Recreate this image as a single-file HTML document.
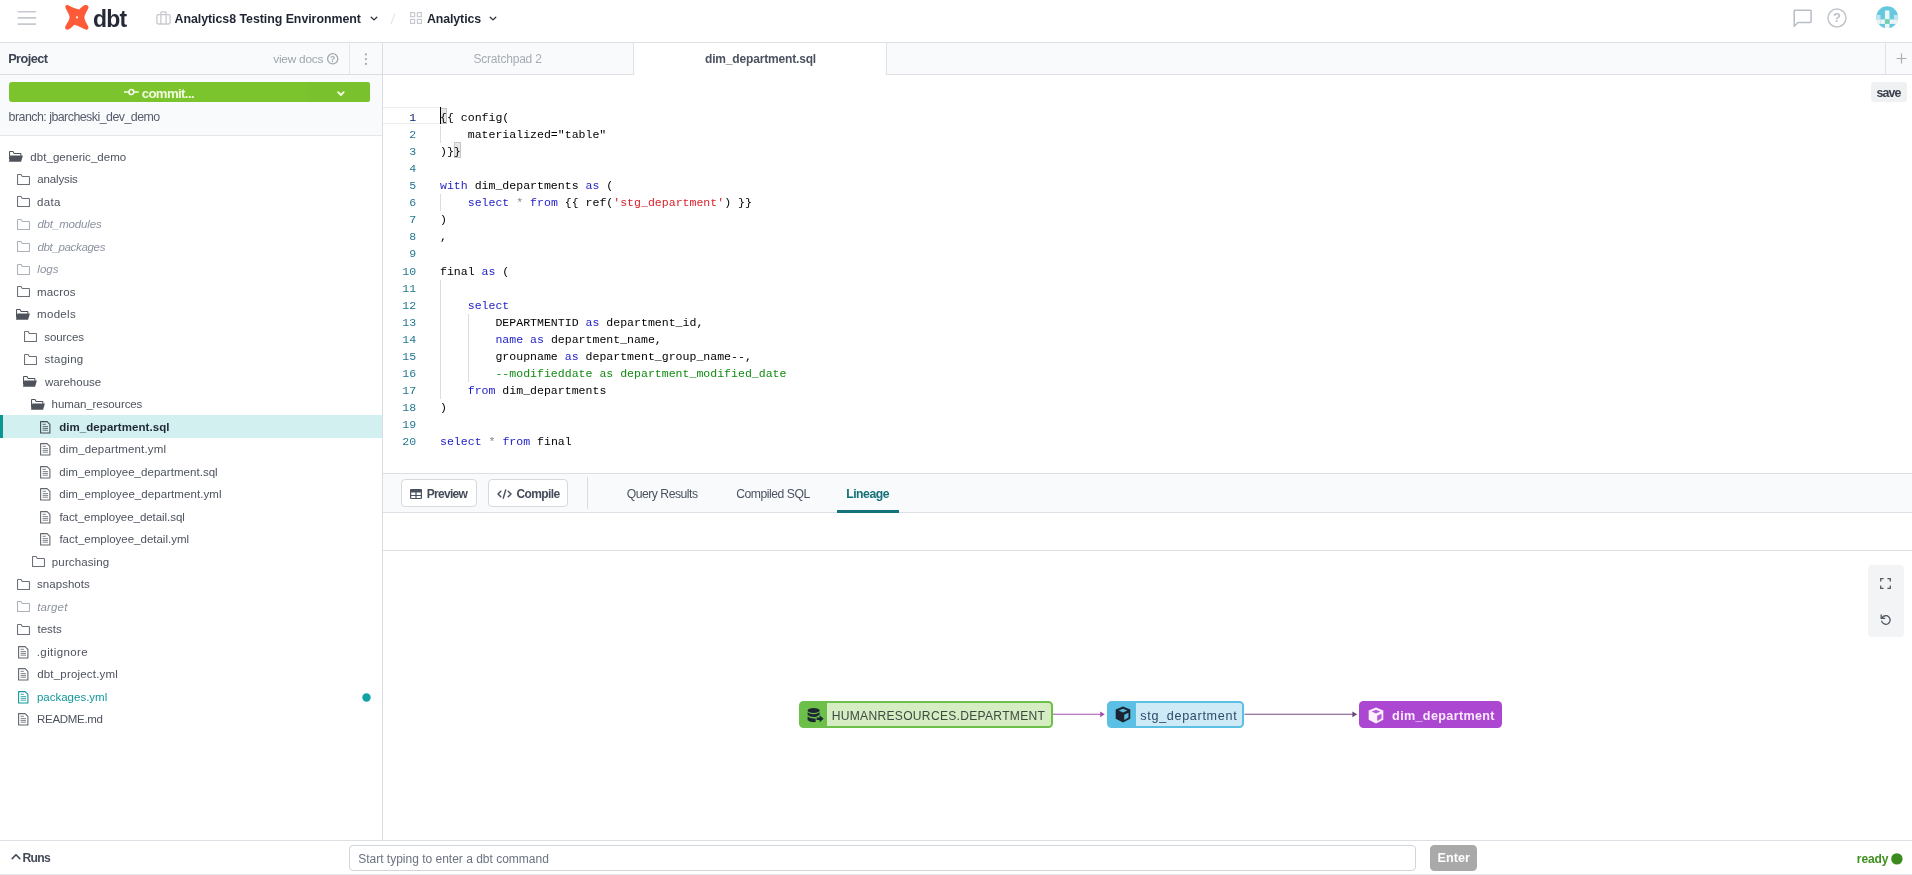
<!DOCTYPE html>
<html lang="en">
<head>
<meta charset="utf-8">
<title>dbt Cloud IDE - dim_department.sql</title>
<style>
*{box-sizing:border-box;margin:0;padding:0}
html,body{width:1912px;height:875px;overflow:hidden;background:#fff}
body{position:relative;will-change:transform;font-family:"Liberation Sans",sans-serif;font-size:11.5px;color:#4a5261;-webkit-font-smoothing:antialiased}
.abs{position:absolute}
span.t{position:absolute;white-space:nowrap;line-height:1;transform-origin:0 50%}
svg{position:absolute;overflow:visible}

/* ---------- top header ---------- */
#top{position:absolute;left:0;top:0;width:1912px;height:43px;background:#fff;border-bottom:1px solid #dfe1e4}
#top .t{font-weight:700;color:#1f2532}

/* ---------- sidebar ---------- */
#side{position:absolute;left:0;top:43px;width:383px;height:798px;background:#fff;border-right:1px solid #d9dce1}
#phead{position:absolute;left:0;top:0;width:382px;height:32px;background:#f9fafb;border-bottom:1px solid #dcdee2}
#pgit{position:absolute;left:0;top:32px;width:382px;height:61px;background:#f9fafb;border-bottom:1px solid #e3e6ea}
#commit{position:absolute;left:9px;top:7px;width:361px;height:20px;border-radius:3px;background:#7bc42e;overflow:hidden}
#commit i{position:absolute;right:0;top:0;width:62px;height:20px;background:#79c22d}
#tree{position:absolute;left:0;top:102.2px;width:382px;list-style:none}
#tree li{position:relative;height:22.5px;width:382px}
#tree li.sel{background:#d3f0f0;border-left:3px solid #0c9593}
#tree li .t{color:#4c525e}
#tree li.ign .t{font-style:italic;color:#8c93a0}
#tree li.sel .t{font-weight:700;color:#1f2733}
#tree li.mod .t{color:#12979b}

/* ---------- main ---------- */
#tabs{position:absolute;left:383px;top:43px;width:1529px;height:32px;background:#f9fafb;border-bottom:1px solid #dcdee2}
#tabs .tab{position:absolute;top:0;height:32px}
#tab1{left:0;width:251px;border-right:1px solid #dfe2e6}
#tab2{left:251px;width:253px;background:#fff;height:32px;border-right:1px solid #dfe2e6}
#tabplus{position:absolute;left:1502px;top:0;width:27px;height:31px;border-left:1px solid #dfe2e6}
#editor{position:absolute;left:383px;top:75px;width:1529px;height:398px;background:#fff}
#save{position:absolute;left:1488px;top:7px;width:36px;height:20px;border-radius:3px;background:#f0f1f3}
#code{position:absolute;left:0;top:33.7px;width:1529px;font-family:"Liberation Mono",monospace;font-size:11.55px;line-height:17.1px;color:#000;list-style:none}
#code li{position:relative;height:17.1px;white-space:pre}
#code li b{position:absolute;left:0;width:33.2px;text-align:right;font-weight:400;color:#237893}
#code li code{position:absolute;left:57px;font-family:inherit}
#code .k{color:#1d1dc4}
#code .s{color:#d8222c}
#code .c{color:#118a11}
#code .o{color:#8a8a8a}
#code .g{position:absolute;width:1px;background:#dcdcdc;top:0;height:17.1px}

#bar{position:absolute;left:383px;top:473px;width:1529px;height:40px;background:#f9fafb;border-top:1px solid #dcdfe3;border-bottom:1px solid #dcdfe3}
.btn{position:absolute;top:5.4px;height:27.6px;background:#fff;border:1px solid #d6dade;border-radius:4px}
#bar .t{color:#4a5261}
#strip{position:absolute;left:383px;top:513px;width:1529px;height:38px;background:#fff;border-bottom:1px solid #dcdfe3}
#graph{position:absolute;left:383px;top:551px;width:1529px;height:290px;background:#fff}
.node{position:absolute;top:150px;height:27px;border-radius:4.5px}
#ctl{position:absolute;left:1485px;top:14px;width:36px;height:72px;border-radius:4px;background:#f3f4f6}

/* ---------- footer ---------- */
#foot{position:absolute;left:0;top:840px;width:1912px;height:35px;background:#fff;border-top:1px solid #dcdfe3;border-bottom:1px solid #e3e6ea}
#cmd{position:absolute;left:349px;top:4px;width:1067px;height:26px;border:1px solid #d2d5d9;border-radius:4px;background:#fff}
#enter{position:absolute;left:1430px;top:4px;width:47px;height:26px;border-radius:4.5px;background:#a9a9a9}
</style>
</head>
<body>
<header id="top">
<svg style="left:17px;top:10px" width="20" height="16" viewBox="0 0 20 16"><g stroke="#c6cad0" stroke-width="1.6" stroke-linecap="round"><path d="M1.2 1.7H18.6M1.2 7.9H18.6M1.2 14.1H18.6"/></g></svg>
<svg style="left:60px;top:0" width="35" height="35" viewBox="0 0 35 35"><path fill="#fd5a38" d="M5.3 6.6C5.3 5.4 6.6 4.7 7.9 5.1C11.5 6.9 15.6 9 19.3 9.5C20.6 8 22.6 6.3 24.4 5.3C25.8 4.6 27.6 5 28.2 6.2C28.8 7.4 28.3 8.6 27.6 9.8C25.6 13.5 24.4 15.6 24.4 17.4C24.4 19.4 26 22.6 28 26C28.9 27.6 28.4 29 27.2 29.5C26 30 24.8 29.4 23.6 28.8C20.6 27.3 17.6 25.6 14.2 24.8C13 26.2 11.6 27.6 10.2 28.6C8.8 29.7 7 30 6 29.2C4.8 28.2 5 26.8 5.8 25.4C7.8 22 9.6 19.4 9.6 17.4C9.6 15.4 7.6 12 5.9 8.8C5.5 8 5.3 7.3 5.3 6.6Z"/><circle cx="17" cy="17.4" r="1.15" fill="#fff1e0"/></svg>
<span class="t" id="dbt" style="left:92.93px;top:7.50px;font-size:23px;letter-spacing:-0.759px;color:#262a38;">dbt</span>
<svg style="left:156px;top:11px" width="15" height="14" viewBox="0 0 15 14"><g fill="none" stroke="#c6c9ce" stroke-width="1.3" stroke-linejoin="round"><rect x="0.9" y="3.6" width="13.2" height="9.4" rx="1.4"/><path d="M4.9 3.6V1.6a.8 .8 0 0 1 .8-.8h3.6a.8 .8 0 0 1 .8 .8V3.6M4.9 3.6V13M10.1 3.6V13"/></g></svg>
<span class="t" id="env" style="left:174.54px;top:13.12px;font-size:12.4px;letter-spacing:-0.047px;">Analytics8 Testing Environment</span>
<svg style="left:369.6px;top:16.2px" width="8" height="5" viewBox="0 0 8 5"><path d="M1.2 1.2L4 3.9L6.8 1.2" fill="none" stroke="#2b303b" stroke-width="1.3" stroke-linecap="round" stroke-linejoin="round"/></svg>
<svg style="left:390px;top:13px" width="6" height="12" viewBox="0 0 6 12"><path d="M4.9 .8L.8 11.4" stroke="#e1e3e7" stroke-width="1.1" fill="none"/></svg>
<svg style="left:410px;top:12px" width="12" height="12" viewBox="0 0 12 12"><g fill="none" stroke="#c6c9ce" stroke-width="1.2"><rect x=".6" y=".6" width="4" height="4"/><rect x="7.4" y=".6" width="4" height="4"/><rect x=".6" y="7.4" width="4" height="4"/><rect x="7.4" y="7.4" width="4" height="4"/></g></svg>
<span class="t" id="proj" style="left:426.95px;top:13.12px;font-size:12.4px;letter-spacing:-0.112px;">Analytics</span>
<svg style="left:489.4px;top:16.2px" width="8" height="5" viewBox="0 0 8 5"><path d="M1.2 1.2L4 3.9L6.8 1.2" fill="none" stroke="#2b303b" stroke-width="1.3" stroke-linecap="round" stroke-linejoin="round"/></svg>
<svg style="left:1793px;top:9px" width="20" height="19" viewBox="0 0 20 19"><path d="M1.6 1.2H17.2a.9 .9 0 0 1 .9 .9V12.6a.9 .9 0 0 1-.9 .9H5L1.2 17.2V2.1a.9 .9 0 0 1 .4-.9Z" fill="none" stroke="#b9bdc4" stroke-width="1.5" stroke-linejoin="round"/></svg>
<svg style="left:1827px;top:8px" width="20" height="20" viewBox="0 0 20 20"><circle cx="10" cy="10" r="9" fill="none" stroke="#c2c6cc" stroke-width="1.5"/><text x="10" y="14.3" text-anchor="middle" font-family="Liberation Sans,sans-serif" font-size="13" font-weight="700" fill="#bcc0c6">?</text></svg>
<svg style="left:1876px;top:6px" width="22.4" height="22.4" viewBox="0 0 23 23"><defs><clipPath id="avc"><rect x=".3" y=".3" width="22.4" height="22.4" rx="11.2"/></clipPath></defs><g clip-path="url(#avc)"><rect width="23" height="23" fill="#66c8de"/><rect x="9.20" y="4.60" width="4.60" height="4.60" fill="#eef6f8"/><rect x="9.20" y="9.20" width="4.60" height="4.60" fill="#eef6f8"/><rect x="0.00" y="9.20" width="4.60" height="4.60" fill="#bfe6ef"/><rect x="18.40" y="9.20" width="4.60" height="4.60" fill="#bfe6ef"/><rect x="0.00" y="13.80" width="4.60" height="4.60" fill="#eef4f6"/><rect x="4.60" y="13.80" width="4.60" height="4.60" fill="#eef4f6"/><rect x="13.80" y="13.80" width="4.60" height="4.60" fill="#eef4f6"/><rect x="18.40" y="13.80" width="4.60" height="4.60" fill="#eef4f6"/><rect x="9.20" y="13.80" width="4.60" height="4.60" fill="#6fcfb0"/><rect x="9.20" y="18.40" width="4.60" height="4.60" fill="#eef6f8"/></g></svg>
</header>
<aside id="side">
<div id="phead">
<span class="t" id="project" style="left:8.18px;top:9.59px;font-size:12.8px;letter-spacing:-0.599px;font-weight:700;color:#3d4453;">Project</span>
<span class="t" id="viewdocs" style="left:273.22px;top:10.87px;font-size:11.8px;letter-spacing:-0.195px;color:#9da3ad;">view docs</span>
<svg style="left:327px;top:10.3px" width="12" height="12" viewBox="0 0 12 12"><circle cx="5.7" cy="5.8" r="5.1" fill="none" stroke="#a3a9b3" stroke-width="1.3"/><text x="5.7" y="8.9" text-anchor="middle" font-family="Liberation Sans,sans-serif" font-size="8.6" font-weight="700" fill="#a3a9b3">?</text></svg>
<div class="abs" style="left:349px;top:0;width:1px;height:31px;background:#e3e6ea"></div>
<svg style="left:364px;top:10px" width="4" height="13" viewBox="0 0 4 13"><g fill="#a3a9b3"><circle cx="1.9" cy="1.4" r="1.1"/><circle cx="1.9" cy="6.1" r="1.1"/><circle cx="1.9" cy="10.9" r="1.1"/></g></svg>
</div>
<div id="pgit">
<div id="commit"><i></i>
<svg style="left:114.8px;top:6px" width="16" height="8" viewBox="0 0 16 8"><g stroke="#f4fbe8" stroke-width="1.7" fill="none"><circle cx="7.4" cy="4" r="2.5"/><path d="M0 4H4.6M10.2 4H14.8"/></g></svg>
<span class="t" id="committ" style="left:132.67px;top:4.75px;font-size:13.2px;letter-spacing:-0.614px;font-weight:700;color:#f1fbdc;">commit...</span>
<svg style="left:327.6px;top:8.7px" width="8" height="6" viewBox="0 0 8 6"><path d="M1.1 1.2L3.9 4L6.7 1.2" fill="none" stroke="#f1fbdc" stroke-width="1.9" stroke-linecap="round" stroke-linejoin="round"/></svg>
</div>
<span class="t" id="branch" style="left:8.59px;top:36.12px;font-size:12.4px;letter-spacing:-0.525px;color:#555c6b;">branch: jbarcheski_dev_demo</span>
</div>
<ul id="tree">
<li><svg style="left:9.1px;top:6.3px" width="15" height="11" viewBox="0 0 15 11"><path d="M.55 8.6V1A.45 .45 0 0 1 1 .55H4L5.2 2.5H11.4A.45 .45 0 0 1 11.85 2.95V4.7" fill="none" stroke="#4d525b" stroke-width="1.05" stroke-linejoin="round"/><path fill="#4d525b" d="M0 10.8L1.3 4.6H13.9L12.1 10.8Z"/></svg><span class="t" id="tr0" style="left:30.34px;top:6.40px;font-size:11.5px;letter-spacing:0.044px;">dbt_generic_demo</span></li>
<li><svg style="left:17.0px;top:5.9px" width="13" height="11" viewBox="0 0 13 11"><path d="M.55 10.4V1A.45 .45 0 0 1 1 .55H4.1L5.3 2.5H12A.45 .45 0 0 1 12.45 2.95V10.4Z" fill="none" stroke="#6b7078" stroke-width="1.05" stroke-linejoin="round"/></svg><span class="t" id="tr1" style="left:37.31px;top:6.40px;font-size:11.5px;letter-spacing:-0.147px;">analysis</span></li>
<li><svg style="left:17.0px;top:5.9px" width="13" height="11" viewBox="0 0 13 11"><path d="M.55 10.4V1A.45 .45 0 0 1 1 .55H4.1L5.3 2.5H12A.45 .45 0 0 1 12.45 2.95V10.4Z" fill="none" stroke="#6b7078" stroke-width="1.05" stroke-linejoin="round"/></svg><span class="t" id="tr2" style="left:37.08px;top:6.40px;font-size:11.5px;letter-spacing:0.298px;">data</span></li>
<li class="ign"><svg style="left:17.0px;top:5.9px" width="13" height="11" viewBox="0 0 13 11"><path d="M.55 10.4V1A.45 .45 0 0 1 1 .55H4.1L5.3 2.5H12A.45 .45 0 0 1 12.45 2.95V10.4Z" fill="none" stroke="#adb1b8" stroke-width="1.05" stroke-linejoin="round"/></svg><span class="t" id="tr3" style="left:37.39px;top:6.40px;font-size:11.5px;letter-spacing:-0.156px;">dbt_modules</span></li>
<li class="ign"><svg style="left:17.0px;top:5.9px" width="13" height="11" viewBox="0 0 13 11"><path d="M.55 10.4V1A.45 .45 0 0 1 1 .55H4.1L5.3 2.5H12A.45 .45 0 0 1 12.45 2.95V10.4Z" fill="none" stroke="#adb1b8" stroke-width="1.05" stroke-linejoin="round"/></svg><span class="t" id="tr4" style="left:37.38px;top:6.40px;font-size:11.5px;letter-spacing:-0.326px;">dbt_packages</span></li>
<li class="ign"><svg style="left:17.0px;top:5.9px" width="13" height="11" viewBox="0 0 13 11"><path d="M.55 10.4V1A.45 .45 0 0 1 1 .55H4.1L5.3 2.5H12A.45 .45 0 0 1 12.45 2.95V10.4Z" fill="none" stroke="#adb1b8" stroke-width="1.05" stroke-linejoin="round"/></svg><span class="t" id="tr5" style="left:37.37px;top:6.40px;font-size:11.5px;letter-spacing:-0.022px;">logs</span></li>
<li><svg style="left:17.0px;top:5.9px" width="13" height="11" viewBox="0 0 13 11"><path d="M.55 10.4V1A.45 .45 0 0 1 1 .55H4.1L5.3 2.5H12A.45 .45 0 0 1 12.45 2.95V10.4Z" fill="none" stroke="#6b7078" stroke-width="1.05" stroke-linejoin="round"/></svg><span class="t" id="tr6" style="left:36.93px;top:6.40px;font-size:11.5px;letter-spacing:0.184px;">macros</span></li>
<li><svg style="left:16.0px;top:6.3px" width="15" height="11" viewBox="0 0 15 11"><path d="M.55 8.6V1A.45 .45 0 0 1 1 .55H4L5.2 2.5H11.4A.45 .45 0 0 1 11.85 2.95V4.7" fill="none" stroke="#4d525b" stroke-width="1.05" stroke-linejoin="round"/><path fill="#4d525b" d="M0 10.8L1.3 4.6H13.9L12.1 10.8Z"/></svg><span class="t" id="tr7" style="left:36.98px;top:6.40px;font-size:11.5px;letter-spacing:0.345px;">models</span></li>
<li><svg style="left:24.3px;top:5.9px" width="13" height="11" viewBox="0 0 13 11"><path d="M.55 10.4V1A.45 .45 0 0 1 1 .55H4.1L5.3 2.5H12A.45 .45 0 0 1 12.45 2.95V10.4Z" fill="none" stroke="#6b7078" stroke-width="1.05" stroke-linejoin="round"/></svg><span class="t" id="tr8" style="left:44.33px;top:6.40px;font-size:11.5px;letter-spacing:-0.096px;">sources</span></li>
<li><svg style="left:24.3px;top:5.9px" width="13" height="11" viewBox="0 0 13 11"><path d="M.55 10.4V1A.45 .45 0 0 1 1 .55H4.1L5.3 2.5H12A.45 .45 0 0 1 12.45 2.95V10.4Z" fill="none" stroke="#6b7078" stroke-width="1.05" stroke-linejoin="round"/></svg><span class="t" id="tr9" style="left:44.56px;top:6.40px;font-size:11.5px;letter-spacing:0.269px;">staging</span></li>
<li><svg style="left:23.3px;top:6.3px" width="15" height="11" viewBox="0 0 15 11"><path d="M.55 8.6V1A.45 .45 0 0 1 1 .55H4L5.2 2.5H11.4A.45 .45 0 0 1 11.85 2.95V4.7" fill="none" stroke="#4d525b" stroke-width="1.05" stroke-linejoin="round"/><path fill="#4d525b" d="M0 10.8L1.3 4.6H13.9L12.1 10.8Z"/></svg><span class="t" id="tr10" style="left:44.90px;top:6.40px;font-size:11.5px;letter-spacing:0.013px;">warehouse</span></li>
<li><svg style="left:30.8px;top:6.3px" width="15" height="11" viewBox="0 0 15 11"><path d="M.55 8.6V1A.45 .45 0 0 1 1 .55H4L5.2 2.5H11.4A.45 .45 0 0 1 11.85 2.95V4.7" fill="none" stroke="#4d525b" stroke-width="1.05" stroke-linejoin="round"/><path fill="#4d525b" d="M0 10.8L1.3 4.6H13.9L12.1 10.8Z"/></svg><span class="t" id="tr11" style="left:51.61px;top:6.40px;font-size:11.5px;letter-spacing:-0.092px;">human_resources</span></li>
<li class="sel"><svg style="left:37.0px;top:5.5px" width="11" height="13" viewBox="0 0 11 13"><path d="M.6 .6H7.1L9.9 3.4V12H.6Z" fill="none" stroke="#454a53" stroke-width="1.1" stroke-linejoin="round"/><path d="M2.6 3.3H5.9M2.6 5.6H8M2.6 7.4H8M2.6 9.2H8" stroke="#454a53" stroke-width="1" fill="none" opacity=".8"/></svg><span class="t" id="tr12" style="left:56.22px;top:6.40px;font-size:11.5px;letter-spacing:0.055px;">dim_department.sql</span></li>
<li><svg style="left:40.0px;top:5.5px" width="11" height="13" viewBox="0 0 11 13"><path d="M.6 .6H7.1L9.9 3.4V12H.6Z" fill="none" stroke="#62676f" stroke-width="1.1" stroke-linejoin="round"/><path d="M2.6 3.3H5.9M2.6 5.6H8M2.6 7.4H8M2.6 9.2H8" stroke="#62676f" stroke-width="1" fill="none" opacity=".8"/></svg><span class="t" id="tr13" style="left:59.22px;top:6.40px;font-size:11.5px;letter-spacing:0.151px;">dim_department.yml</span></li>
<li><svg style="left:40.0px;top:5.5px" width="11" height="13" viewBox="0 0 11 13"><path d="M.6 .6H7.1L9.9 3.4V12H.6Z" fill="none" stroke="#62676f" stroke-width="1.1" stroke-linejoin="round"/><path d="M2.6 3.3H5.9M2.6 5.6H8M2.6 7.4H8M2.6 9.2H8" stroke="#62676f" stroke-width="1" fill="none" opacity=".8"/></svg><span class="t" id="tr14" style="left:59.25px;top:6.40px;font-size:11.5px;letter-spacing:0.045px;">dim_employee_department.sql</span></li>
<li><svg style="left:40.0px;top:5.5px" width="11" height="13" viewBox="0 0 11 13"><path d="M.6 .6H7.1L9.9 3.4V12H.6Z" fill="none" stroke="#62676f" stroke-width="1.1" stroke-linejoin="round"/><path d="M2.6 3.3H5.9M2.6 5.6H8M2.6 7.4H8M2.6 9.2H8" stroke="#62676f" stroke-width="1" fill="none" opacity=".8"/></svg><span class="t" id="tr15" style="left:59.23px;top:6.40px;font-size:11.5px;letter-spacing:0.070px;">dim_employee_department.yml</span></li>
<li><svg style="left:40.0px;top:5.5px" width="11" height="13" viewBox="0 0 11 13"><path d="M.6 .6H7.1L9.9 3.4V12H.6Z" fill="none" stroke="#62676f" stroke-width="1.1" stroke-linejoin="round"/><path d="M2.6 3.3H5.9M2.6 5.6H8M2.6 7.4H8M2.6 9.2H8" stroke="#62676f" stroke-width="1" fill="none" opacity=".8"/></svg><span class="t" id="tr16" style="left:59.40px;top:6.40px;font-size:11.5px;letter-spacing:-0.048px;">fact_employee_detail.sql</span></li>
<li><svg style="left:40.0px;top:5.5px" width="11" height="13" viewBox="0 0 11 13"><path d="M.6 .6H7.1L9.9 3.4V12H.6Z" fill="none" stroke="#62676f" stroke-width="1.1" stroke-linejoin="round"/><path d="M2.6 3.3H5.9M2.6 5.6H8M2.6 7.4H8M2.6 9.2H8" stroke="#62676f" stroke-width="1" fill="none" opacity=".8"/></svg><span class="t" id="tr17" style="left:59.38px;top:6.40px;font-size:11.5px;letter-spacing:-0.005px;">fact_employee_detail.yml</span></li>
<li><svg style="left:31.8px;top:5.9px" width="13" height="11" viewBox="0 0 13 11"><path d="M.55 10.4V1A.45 .45 0 0 1 1 .55H4.1L5.3 2.5H12A.45 .45 0 0 1 12.45 2.95V10.4Z" fill="none" stroke="#6b7078" stroke-width="1.05" stroke-linejoin="round"/></svg><span class="t" id="tr18" style="left:51.87px;top:6.40px;font-size:11.5px;letter-spacing:0.115px;">purchasing</span></li>
<li><svg style="left:17.0px;top:5.9px" width="13" height="11" viewBox="0 0 13 11"><path d="M.55 10.4V1A.45 .45 0 0 1 1 .55H4.1L5.3 2.5H12A.45 .45 0 0 1 12.45 2.95V10.4Z" fill="none" stroke="#6b7078" stroke-width="1.05" stroke-linejoin="round"/></svg><span class="t" id="tr19" style="left:37.07px;top:6.40px;font-size:11.5px;letter-spacing:0.036px;">snapshots</span></li>
<li class="ign"><svg style="left:17.0px;top:5.9px" width="13" height="11" viewBox="0 0 13 11"><path d="M.55 10.4V1A.45 .45 0 0 1 1 .55H4.1L5.3 2.5H12A.45 .45 0 0 1 12.45 2.95V10.4Z" fill="none" stroke="#adb1b8" stroke-width="1.05" stroke-linejoin="round"/></svg><span class="t" id="tr20" style="left:37.25px;top:6.40px;font-size:11.5px;letter-spacing:0.134px;">target</span></li>
<li><svg style="left:17.0px;top:5.9px" width="13" height="11" viewBox="0 0 13 11"><path d="M.55 10.4V1A.45 .45 0 0 1 1 .55H4.1L5.3 2.5H12A.45 .45 0 0 1 12.45 2.95V10.4Z" fill="none" stroke="#6b7078" stroke-width="1.05" stroke-linejoin="round"/></svg><span class="t" id="tr21" style="left:37.51px;top:6.40px;font-size:11.5px;letter-spacing:-0.016px;">tests</span></li>
<li><svg style="left:18.0px;top:5.5px" width="11" height="13" viewBox="0 0 11 13"><path d="M.6 .6H7.1L9.9 3.4V12H.6Z" fill="none" stroke="#62676f" stroke-width="1.1" stroke-linejoin="round"/><path d="M2.6 3.3H5.9M2.6 5.6H8M2.6 7.4H8M2.6 9.2H8" stroke="#62676f" stroke-width="1" fill="none" opacity=".8"/></svg><span class="t" id="tr22" style="left:36.77px;top:6.40px;font-size:11.5px;letter-spacing:0.397px;">.gitignore</span></li>
<li><svg style="left:18.0px;top:5.5px" width="11" height="13" viewBox="0 0 11 13"><path d="M.6 .6H7.1L9.9 3.4V12H.6Z" fill="none" stroke="#62676f" stroke-width="1.1" stroke-linejoin="round"/><path d="M2.6 3.3H5.9M2.6 5.6H8M2.6 7.4H8M2.6 9.2H8" stroke="#62676f" stroke-width="1" fill="none" opacity=".8"/></svg><span class="t" id="tr23" style="left:37.14px;top:6.40px;font-size:11.5px;letter-spacing:0.196px;">dbt_project.yml</span></li>
<li class="mod"><svg style="left:18.0px;top:5.5px" width="11" height="13" viewBox="0 0 11 13"><path d="M.6 .6H7.1L9.9 3.4V12H.6Z" fill="none" stroke="#12979b" stroke-width="1.1" stroke-linejoin="round"/><path d="M2.6 3.3H5.9M2.6 5.6H8M2.6 7.4H8M2.6 9.2H8" stroke="#12979b" stroke-width="1" fill="none" opacity=".8"/></svg><span class="t" id="tr24" style="left:36.89px;top:6.40px;font-size:11.5px;letter-spacing:0.005px;">packages.yml</span><svg style="left:362px;top:7.8px" width="9" height="9" viewBox="0 0 9 9"><circle cx="4.5" cy="4.5" r="4.2" fill="#0fa3a3"/></svg></li>
<li><svg style="left:18.0px;top:5.5px" width="11" height="13" viewBox="0 0 11 13"><path d="M.6 .6H7.1L9.9 3.4V12H.6Z" fill="none" stroke="#62676f" stroke-width="1.1" stroke-linejoin="round"/><path d="M2.6 3.3H5.9M2.6 5.6H8M2.6 7.4H8M2.6 9.2H8" stroke="#62676f" stroke-width="1" fill="none" opacity=".8"/></svg><span class="t" id="tr25" style="left:37.12px;top:6.40px;font-size:11.5px;letter-spacing:-0.315px;">README.md</span></li>
</ul>
</aside>
<nav id="tabs">
<div class="tab" id="tab1"><span class="t" id="tab1t" style="left:90.45px;top:10.16px;font-size:12px;letter-spacing:-0.205px;color:#a6abb4;">Scratchpad 2</span></div>
<div class="tab" id="tab2"><span class="t" id="tab2t" style="left:70.97px;top:10.16px;font-size:12px;letter-spacing:-0.167px;font-weight:700;color:#4b5261;">dim_department.sql</span></div>
<div id="tabplus"><svg style="left:10.4px;top:10px" width="11" height="11" viewBox="0 0 11 11"><path d="M5.5 .6V10.4M.6 5.5H10.4" stroke="#a9aeb6" stroke-width="1.2" fill="none"/></svg></div>
</nav>
<section id="editor">
<div id="save"><span class="t" id="savet" style="left:5.43px;top:5.32px;font-size:12.4px;letter-spacing:-0.828px;font-weight:700;color:#3a404d;">save</span></div>
<div class="abs" style="left:0;top:32.2px;width:57px;height:17.1px;border-top:1.4px solid #ececec;border-bottom:1.4px solid #ececec"></div>
<div class="abs" style="left:57px;top:32.6px;width:7.23px;height:16.50px;background:#e6e9e6;border:1px solid #c4c7c4"></div>
<div class="abs" style="left:70.86px;top:66.80px;width:7.23px;height:16.50px;background:#e6e9e6;border:1px solid #c4c7c4"></div>
<div class="abs" style="left:57px;top:32.4px;width:1.3px;height:17.1px;background:#000"></div>
<ol id="code">
<li><b style="color:#0b216f">1</b><code>{{ config(</code></li>
<li><b>2</b><i class="g" style="left:57px"></i><code>    materialized="table"</code></li>
<li><b>3</b><code>)}}</code></li>
<li><b>4</b><code></code></li>
<li><b>5</b><code><span class="k">with</span> dim_departments <span class="k">as</span> (</code></li>
<li><b>6</b><i class="g" style="left:57px"></i><code>    <span class="k">select</span> <span class="o">*</span> <span class="k">from</span> {{ ref(<span class="s">'stg_department'</span>) }}</code></li>
<li><b>7</b><code>)</code></li>
<li><b>8</b><code>,</code></li>
<li><b>9</b><code></code></li>
<li><b>10</b><code>final <span class="k">as</span> (</code></li>
<li><b>11</b><i class="g" style="left:57px"></i><code></code></li>
<li><b>12</b><i class="g" style="left:57px"></i><code>    <span class="k">select</span></code></li>
<li><b>13</b><i class="g" style="left:57px"></i><i class="g" style="left:84.72px"></i><code>        DEPARTMENTID <span class="k">as</span> department_id,</code></li>
<li><b>14</b><i class="g" style="left:57px"></i><i class="g" style="left:84.72px"></i><code>        <span class="k">name</span> <span class="k">as</span> department_name,</code></li>
<li><b>15</b><i class="g" style="left:57px"></i><i class="g" style="left:84.72px"></i><code>        groupname <span class="k">as</span> department_group_name--,</code></li>
<li><b>16</b><i class="g" style="left:57px"></i><i class="g" style="left:84.72px"></i><code>        <span class="c">--modifieddate as department_modified_date</span></code></li>
<li><b>17</b><i class="g" style="left:57px"></i><code>    <span class="k">from</span> dim_departments</code></li>
<li><b>18</b><code>)</code></li>
<li><b>19</b><code></code></li>
<li><b>20</b><code><span class="k">select</span> <span class="o">*</span> <span class="k">from</span> final</code></li>
</ol>
</section>
<div id="bar">
<div class="btn" style="left:18px;width:76px"><svg style="left:8px;top:8.6px" width="12" height="10" viewBox="0 0 12 10"><path fill="#4a5261" fill-rule="evenodd" d="M1 0H11a1 1 0 0 1 1 1V9a1 1 0 0 1-1 1H1a1 1 0 0 1-1-1V1a1 1 0 0 1 1-1ZM1.2 3.6V5.9H5.4V3.6ZM6.6 3.6V5.9H10.8V3.6ZM1.2 7V8.9H5.4V7ZM6.6 7V8.9H10.8V7Z"/></svg><span class="t" id="preview" style="left:24.67px;top:7.36px;font-size:12px;letter-spacing:-0.691px;font-weight:700;color:#444b59;">Preview</span></div>
<div class="btn" style="left:105px;width:80px"><svg style="left:8px;top:8.6px" width="15" height="10" viewBox="0 0 15 10"><g fill="none" stroke="#4a5261" stroke-width="1.5" stroke-linecap="round" stroke-linejoin="round"><path d="M3.8 2.2L1 5L3.8 7.8M11.2 2.2L14 5L11.2 7.8M8.7 .9L6.3 9.1"/></g></svg><span class="t" id="compile" style="left:27.46px;top:7.36px;font-size:12px;letter-spacing:-0.623px;font-weight:700;color:#444b59;">Compile</span></div>
<div class="abs" style="left:204px;top:3px;width:1px;height:32px;background:#d9dce1"></div>
<span class="t" id="qr" style="left:243.68px;top:13.84px;font-size:12.2px;letter-spacing:-0.484px;">Query Results</span>
<span class="t" id="csql" style="left:353.25px;top:13.84px;font-size:12.2px;letter-spacing:-0.482px;">Compiled SQL</span>
<span class="t" id="lineage" style="left:463.13px;top:13.84px;font-size:12.2px;letter-spacing:-0.431px;font-weight:700;color:#127178;">Lineage</span>
<div class="abs" style="left:454px;top:35.5px;width:62px;height:3px;background:#14737a"></div>
</div>
<div id="strip"></div>
<section id="graph">
<div id="ctl"><svg style="left:11.6px;top:13.3px" width="11" height="11" viewBox="0 0 11 11"><path d="M.7 3.6V.7H3.6M7.4 .7H10.3V3.6M10.3 7.4V10.3H7.4M3.6 10.3H.7V7.4" fill="none" stroke="#555b66" stroke-width="1.3"/></svg><svg style="left:11.7px;top:49px" width="12" height="12" viewBox="0 0 12 12"><path d="M2.1 3.9A4.3 4.3 0 1 1 1.7 7.1" fill="none" stroke="#4d5462" stroke-width="1.3" stroke-linecap="round"/><path d="M1.2 .9V4.4H4.7" fill="none" stroke="#4d5462" stroke-width="1.3" stroke-linejoin="round" stroke-linecap="round"/></svg></div>
<svg style="left:0;top:0" width="1529" height="290" viewBox="383 551 1529 290"><path d="M1052.5 714.3H1102" stroke="#a352ad" stroke-width="1.1" fill="none"/><path d="M1100.2 711.4L1104.8 714.3L1100.2 717.2Z" fill="#a352ad"/><path d="M1244.5 714.3H1354" stroke="#7a4a86" stroke-width="1.1" fill="none"/><path d="M1352.4 711.4L1357.2 714.3L1352.4 717.2Z" fill="#6d4779"/></svg>
<div class="node" style="left:416px;width:253.5px;background:linear-gradient(90deg,#6cc04a 0,#6cc04a 26.4px,#d6edc4 26.4px);border:2px solid #6cc04a"><svg style="left:5.8px;top:4.9px" width="17" height="15" viewBox="0 0 17 15"><g fill="#1d2733"><ellipse cx="6.6" cy="2.6" rx="6" ry="2.5"/><path d="M.6 4.2Q3 6.2 6.6 6.2T12.6 4.2V7.1Q11.6 7.1 10 8.4Q8.4 8.9 6.6 8.9Q3 8.9 .6 7ZM.6 8.6Q3 10.6 6.6 10.6L8.6 10.5V12.6Q8.6 13.4 9.2 13.8Q8 14.2 6.6 14.2Q3 14.2 .6 12.2Z"/><path d="M9.6 9.6H12.6V7.3L16.6 10.8L12.6 14.3V12H9.6Z"/></g></svg><span class="t" id="n1" style="left:30.74px;top:7.10px;font-size:12.1px;letter-spacing:0.278px;color:#3c4a41;">HUMANRESOURCES.DEPARTMENT</span></div>
<div class="node" style="left:724.2px;width:137px;background:linear-gradient(90deg,#5cc0e4 0,#5cc0e4 26.6px,#cfeaf7 26.6px);border:2px solid #5cc0e4"><svg style="left:6.2px;top:3.4px" width="16" height="17" viewBox="0 0 16 17"><path fill="#1b2431" d="M8 .4L15.3 3.6V12.8L8 16.6L.7 12.8V3.6Z"/><path d="M8 2.7L12.4 4.6L8 6.6L3.6 4.6Z" fill="#5cc0e4" opacity=".95"/><path d="M9.2 8.7L13.5 6.7V11.6L9.2 13.9Z" fill="#5cc0e4" opacity=".95"/></svg><span class="t" id="n2" style="left:31.12px;top:6.80px;font-size:12.6px;letter-spacing:0.679px;color:#2b4a66;">stg_department</span></div>
<div class="node" style="left:976.4000000000001px;width:142.4px;background:#ab47d1"><svg style="left:8.2px;top:5.6px" width="16" height="17" viewBox="0 0 16 17"><path fill="#fdf0ff" d="M8 .4L15.3 3.6V12.8L8 16.6L.7 12.8V3.6Z"/><path d="M8 2.7L12.4 4.6L8 6.6L3.6 4.6Z" fill="#ab47d1" opacity=".9"/><path d="M9.2 8.7L13.5 6.7V11.6L9.2 13.9Z" fill="#ab47d1" opacity=".9"/></svg><span class="t" id="n3" style="left:32.71px;top:8.80px;font-size:12.6px;letter-spacing:0.345px;font-weight:700;color:#fbeaff;">dim_department</span></div>
</section>
<footer id="foot">
<svg style="left:11.2px;top:12px" width="10" height="7" viewBox="0 0 10 7"><path d="M1.2 5.6L5 1.7L8.8 5.6" fill="none" stroke="#444b59" stroke-width="1.6" stroke-linecap="round" stroke-linejoin="round"/></svg>
<span class="t" id="runs" style="left:22.58px;top:11.14px;font-size:12.2px;letter-spacing:-0.792px;font-weight:700;color:#444b59;">Runs</span>
<div id="cmd"><span class="t" id="cmdt" style="left:8.15px;top:6.76px;font-size:12.0px;letter-spacing:-0.001px;color:#6b7280;">Start typing to enter a dbt command</span></div>
<div id="enter"><span class="t" id="entert" style="left:7.50px;top:7.30px;font-size:12.6px;letter-spacing:0.042px;font-weight:700;color:#fff;">Enter</span></div>
<span class="t" id="ready" style="left:1856.86px;top:11.56px;font-size:12.0px;letter-spacing:-0.107px;font-weight:700;color:#3f8f1f;">ready</span>
<svg style="left:1891.2px;top:11.6px" width="12" height="12" viewBox="0 0 12 12"><circle cx="5.9" cy="5.9" r="5.7" fill="#3a8a1e"/></svg>
</footer>
</body>
</html>
